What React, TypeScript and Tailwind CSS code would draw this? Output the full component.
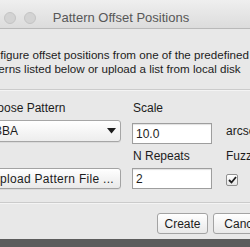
import React from "react";

const F = { fontFamily: '"Liberation Sans", Arial, sans-serif' } as const;

export default function App() {
  return (
    <div className="w-[250px] h-[247px] overflow-hidden bg-[#5c5c5c]">
      <div className="h-[239px] bg-[#e8e8e8] flex flex-col overflow-hidden">
        {/* title bar */}
        <div className="h-[29px] shrink-0 border-b border-[#b9b9b9] bg-gradient-to-b from-[#efefef] to-[#dcdcdc] flex items-center relative">
          <div className="flex gap-[8px] ml-[4px] mt-[7px]">
            <div className="w-[12px] h-[12px] rounded-full bg-[#d3d3d3] border border-[#c4c4c4]" />
            <div className="w-[12px] h-[12px] rounded-full bg-[#d3d3d3] border border-[#c4c4c4]" />
          </div>
          <div
            className="flex-1 text-center text-[13px] text-[#575757] mt-[7px] mr-[44px]"
            style={{ fontFamily: '"Liberation Sans", Arial, sans-serif' }}
          >
            Pattern Offset Positions
          </div>
        </div>

        <div className="ml-[-22px] w-[320px] text-[12px] text-[#1c1c1c]" style={F}>
          <div className="mt-[19px] leading-[14px] ml-[1px] text-[11.6px]">
            <div>Configure offset positions from one of the predefined</div>
            <div>patterns listed below or upload a list from local disk</div>
          </div>
          <div className="mt-[13px] h-[1px] bg-[#cbcbcb] w-[400px]" />
          <div className="h-[1px] bg-[#f4f4f4] w-[400px]" />

          <div className="flex mt-[10px]">
            {/* left column */}
            <div className="w-[143px] flex flex-col">
              <div className="leading-[14px] ml-[4px]">Choose Pattern</div>
              <div className="mt-[5px] h-[22px] rounded-[3px] border border-[#a6a6a6] bg-gradient-to-b from-[#ffffff] to-[#ededed] flex items-center justify-between pl-[7px] pr-[4px] shadow-[0_1px_0_rgba(0,0,0,0.06)]">
                <span>ABBA</span>
                <svg width="9" height="6" viewBox="0 0 9 6">
                  <path d="M0 0 H9 L4.5 5.5 Z" fill="#1e1e1e" />
                </svg>
              </div>
              <div className="mt-[26px] h-[21px] rounded-[3px] border border-[#a3a3a3] bg-gradient-to-b from-[#ffffff] to-[#e9e9e9] flex items-center justify-end pr-[6px] shadow-[0_1px_0_rgba(0,0,0,0.06)]">
                <span className="tracking-[0.3px] whitespace-nowrap">Upload Pattern File ...</span>
              </div>
            </div>

            {/* middle column */}
            <div className="ml-[11px] w-[80px] flex flex-col">
              <div className="leading-[14px] ml-[1px]">Scale</div>
              <div className="mt-[8px] h-[21px] border border-[#9e9e9e] bg-white flex items-center pl-[3px] shadow-[inset_0_1px_1px_rgba(0,0,0,0.12)]">
                10.0
              </div>
              <div className="mt-[5px] leading-[14px] ml-[1px]">N Repeats</div>
              <div className="mt-[5px] h-[21px] border border-[#9e9e9e] bg-white flex items-center pl-[3px] shadow-[inset_0_1px_1px_rgba(0,0,0,0.12)]">
                2
              </div>
            </div>

            {/* right column */}
            <div className="ml-[13px] flex flex-col">
              <div className="h-[14px]" />
              <div className="mt-[9px] leading-[14px] ml-[1px]">arcsec</div>
              <div className="mt-[11px] leading-[14px] ml-[1px]">Fuzzy</div>
              <div className="mt-[11px] ml-[1px] w-[12px] h-[12px] border border-[#8f8f8f] bg-gradient-to-b from-white to-[#e6e6e6] flex items-center justify-center rounded-[2px]">
                <svg width="9" height="8" viewBox="0 0 9 8">
                  <path d="M1 4 L3.5 6.5 L8 1" stroke="#1e1e1e" strokeWidth="1.8" fill="none" />
                </svg>
              </div>
            </div>
          </div>

          <div className="mt-[13px] h-[1px] bg-[#cbcbcb] w-[400px]" />
          <div className="h-[1px] bg-[#f4f4f4] w-[400px]" />

          <div className="flex mt-[9px] ml-[179px] gap-[5px]">
            <div className="w-[51px] h-[21px] rounded-[3px] border border-[#a3a3a3] bg-gradient-to-b from-white to-[#e9e9e9] flex items-center justify-center">
              Create
            </div>
            <div className="w-[60px] h-[21px] rounded-[3px] border border-[#a3a3a3] bg-gradient-to-b from-white to-[#e9e9e9] flex items-center justify-center">
              Cancel
            </div>
          </div>
        </div>
      </div>
    </div>
  );
}
